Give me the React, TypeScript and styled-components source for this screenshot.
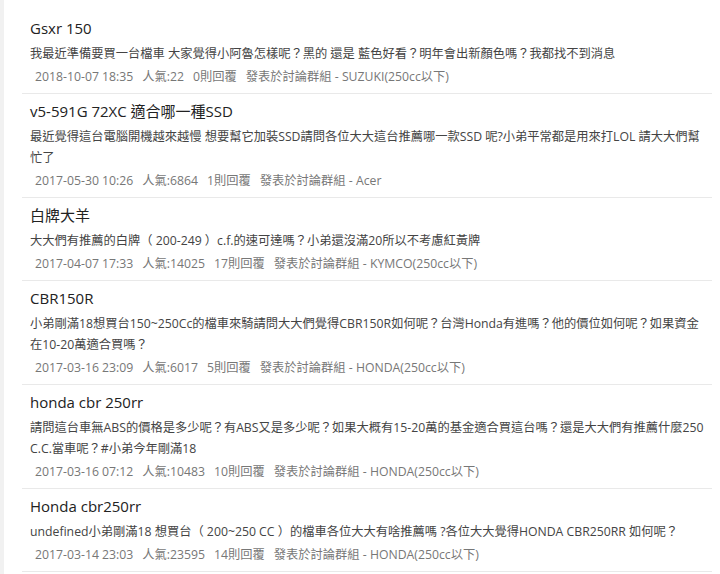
import { createGlobalStyle, styled } from "styled-components";

type Post = {
	title: string;
	body: string;
	date: string;
	views: number;
	replies: number;
	group: string;
};

const posts: Post[] = [
	{
		title: "Gsxr 150",
		body: "我最近準備要買一台檔車 大家覺得小阿魯怎樣呢？黑的 還是 藍色好看？明年會出新顏色嗎？我都找不到消息",
		date: "2018-10-07 18:35",
		views: 22,
		replies: 0,
		group: "SUZUKI(250cc以下)",
	},
	{
		title: "v5-591G 72XC 適合哪一種SSD",
		body: "最近覺得這台電腦開機越來越慢 想要幫它加裝SSD請問各位大大這台推薦哪一款SSD 呢?小弟平常都是用來打LOL 請大大們幫忙了",
		date: "2017-05-30 10:26",
		views: 6864,
		replies: 1,
		group: "Acer",
	},
	{
		title: "白牌大羊",
		body: "大大們有推薦的白牌（ 200-249 ）c.f.的速可達嗎？小弟還沒滿20所以不考慮紅黃牌",
		date: "2017-04-07 17:33",
		views: 14025,
		replies: 17,
		group: "KYMCO(250cc以下)",
	},
	{
		title: "CBR150R",
		body: "小弟剛滿18想買台150~250Cc的檔車來騎請問大大們覺得CBR150R如何呢？台灣Honda有進嗎？他的價位如何呢？如果資金在10-20萬適合買嗎？",
		date: "2017-03-16 23:09",
		views: 6017,
		replies: 5,
		group: "HONDA(250cc以下)",
	},
	{
		title: "honda cbr 250rr",
		body: "請問這台車無ABS的價格是多少呢？有ABS又是多少呢？如果大概有15-20萬的基金適合買這台嗎？還是大大們有推薦什麼250C.C.當車呢？#小弟今年剛滿18",
		date: "2017-03-16 07:12",
		views: 10483,
		replies: 10,
		group: "HONDA(250cc以下)",
	},
	{
		title: "Honda cbr250rr",
		body: "undefined小弟剛滿18 想買台（ 200~250 CC ）的檔車各位大大有啥推薦嗎 ?各位大大覺得HONDA CBR250RR 如何呢？",
		date: "2017-03-14 23:03",
		views: 23595,
		replies: 14,
		group: "HONDA(250cc以下)",
	},
];

const GlobalStyle = createGlobalStyle`
	body {
		margin: 0;
		background: #ffffff;
		font-family: "Open Sans", "Noto Sans CJK TC", sans-serif;
	}
`;

const Page = styled.div`
	min-height: 100vh;
	border-left: 4px solid #f1f1f1;
	padding-top: 11px;
	box-sizing: border-box;
`;

const List = styled.ul`
	list-style: none;
	margin: 0 0 0 18px;
	padding: 0;
	width: 690px;
`;

const Item = styled.li`
	padding: 6px 2px 6px 8px;
	border-bottom: 1px solid #e9e9e9;
`;

const Title = styled.div`
	font-size: 15px;
	line-height: 22px;
	color: #222;
`;

const Body = styled.p`
	margin: 4px 0 0;
	font-size: 12.25px;
	line-height: 21px;
	color: #444;
	word-break: break-all;
`;

const Meta = styled.div`
	margin-top: 3px;
	padding-left: 5px;
	display: flex;
	gap: 9px;
	font-size: 12.25px;
	line-height: 20px;
	color: #777;
`;

export default function App() {
	return (
		<>
			<GlobalStyle />
			<Page>
				<List>
					{posts.map((p) => (
						<Item key={p.title}>
							<Title>{p.title}</Title>
							<Body>{p.body}</Body>
							<Meta>
								<span>{p.date}</span>
								<span>人氣:{p.views}</span>
								<span>{p.replies}則回覆</span>
								<span>發表於討論群組 - {p.group}</span>
							</Meta>
						</Item>
					))}
				</List>
			</Page>
		</>
	);
}
